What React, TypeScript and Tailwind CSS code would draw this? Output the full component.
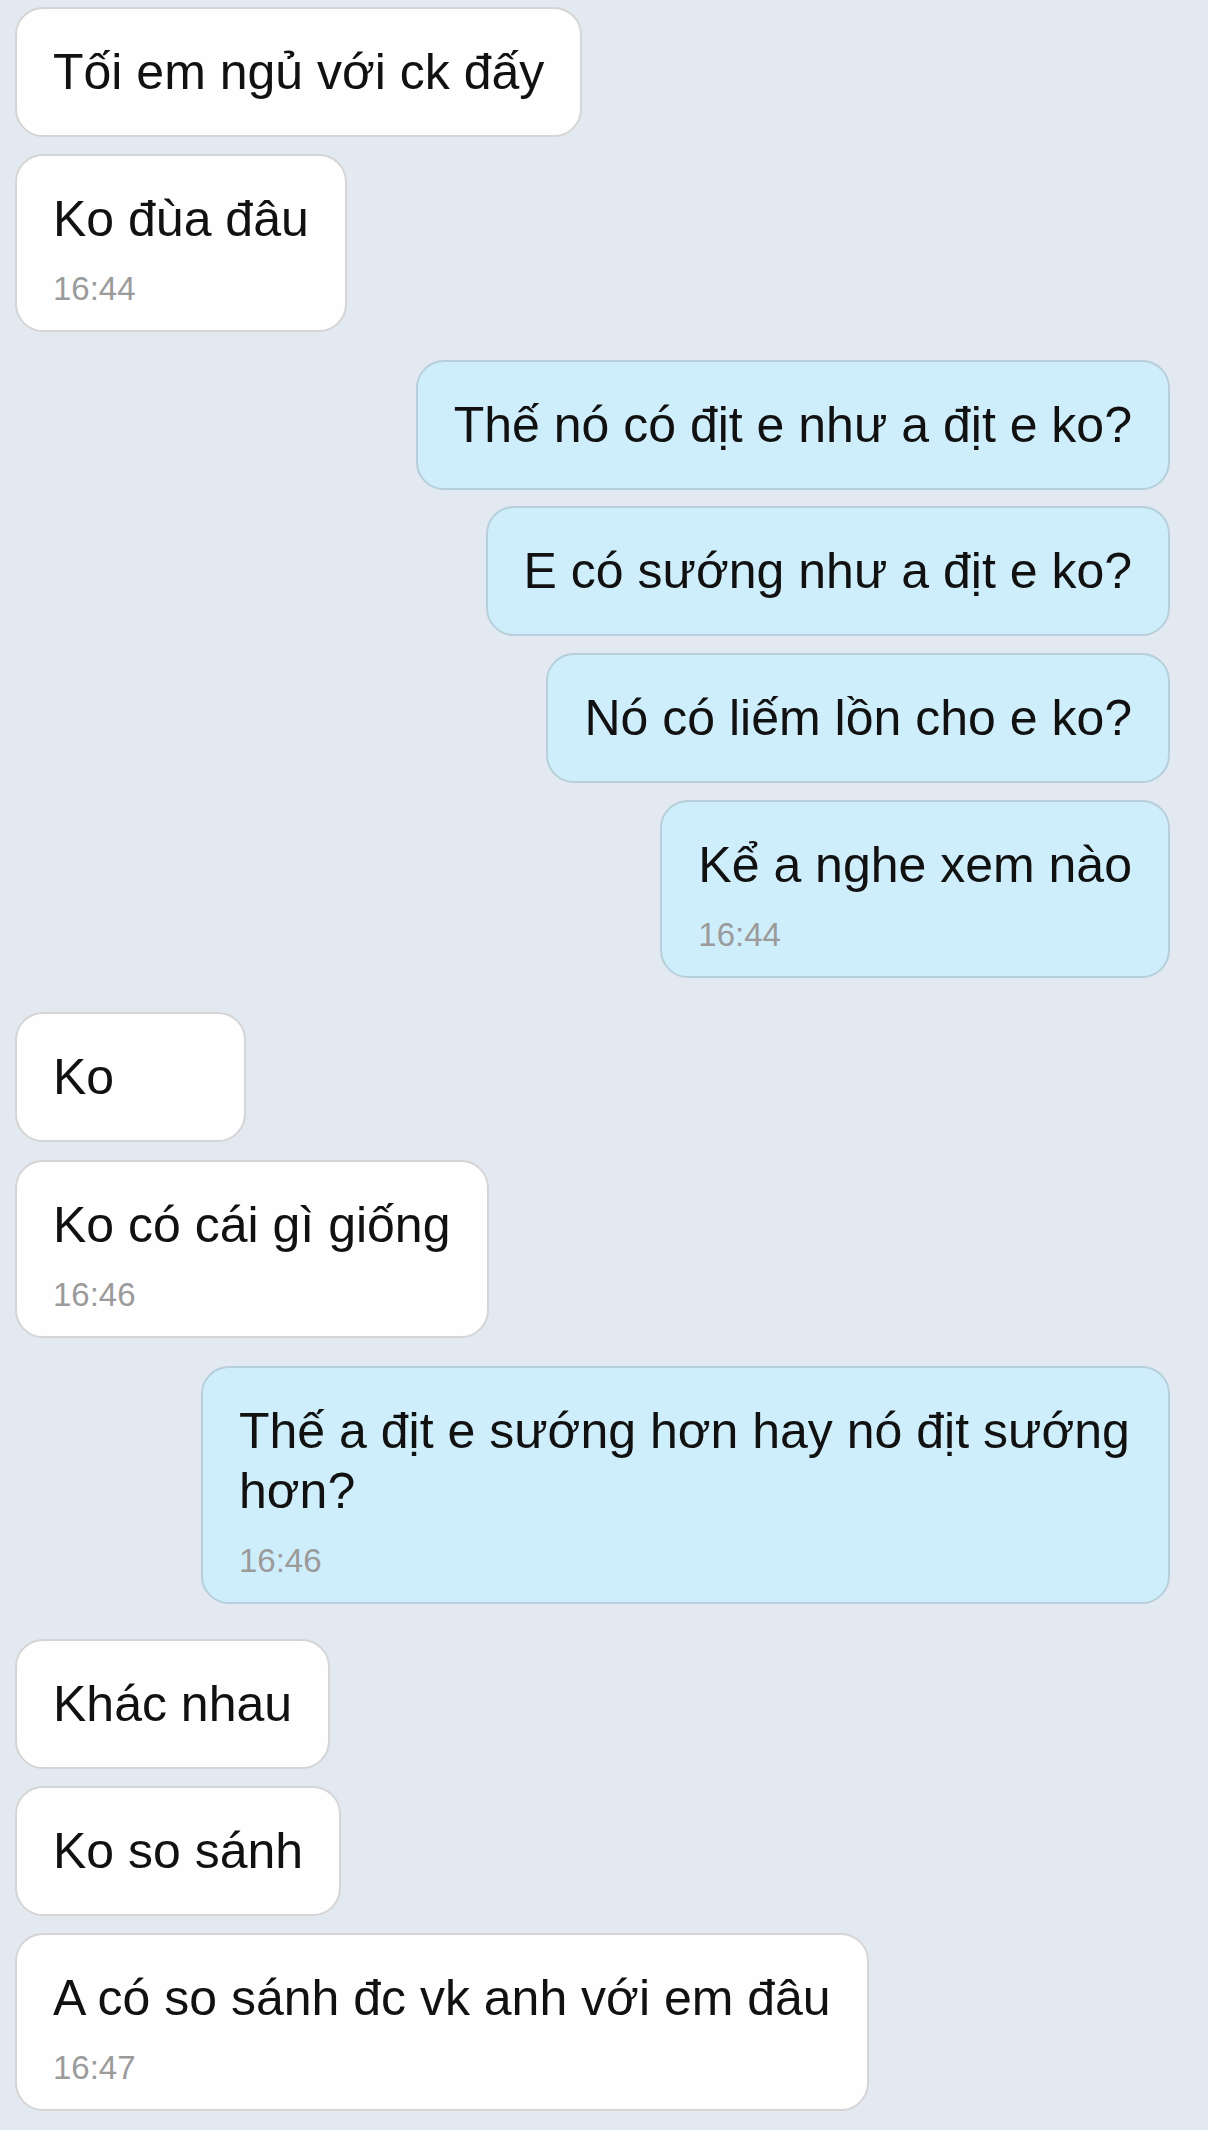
type Msg = {
  text: string;
  mine?: boolean;
  time?: string;
  mt: string;
};

const messages: Msg[] = [
  { text: "Tối em ngủ với ck đấy", mt: "mt-[7px]" },
  { text: "Ko đùa đâu", time: "16:44", mt: "mt-[17px]" },
  { text: "Thế nó có địt e như a địt e ko?", mine: true, mt: "mt-[28px]" },
  { text: "E có sướng như a địt e ko?", mine: true, mt: "mt-[16px]" },
  { text: "Nó có liếm lồn cho e ko?", mine: true, mt: "mt-[17px]" },
  { text: "Kể a nghe xem nào", mine: true, time: "16:44", mt: "mt-[17px]" },
  { text: "Ko", mt: "mt-[34px]" },
  { text: "Ko có cái gì giống", time: "16:46", mt: "mt-[18px]" },
  {
    text: "Thế a địt e sướng hơn hay nó địt sướng hơn?",
    mine: true,
    time: "16:46",
    mt: "mt-[28px]",
  },
  { text: "Khác nhau", mt: "mt-[35px]" },
  { text: "Ko so sánh", mt: "mt-[17px]" },
  { text: "A có so sánh đc vk anh với em đâu", time: "16:47", mt: "mt-[17px]" },
];

function Bubble({ msg }: { msg: Msg }) {
  return (
    <div
      className={`${msg.mt} min-w-[231px] max-w-[969px] rounded-[28px] border-2 pl-[36px] pr-[36px] pt-[33px] ${
        msg.time ? "pb-[21px]" : "pb-[33px]"
      } ${
        msg.mine
          ? "self-end border-[#b7cfdb] bg-[#cfeefc]"
          : "self-start border-[#d5d5d5] bg-[#fefefe]"
      }`}
    >
      <div className="text-[50px] leading-[60px] text-[#111111]">{msg.text}</div>
      {msg.time && (
        <div className="mt-[20px] text-[33px] leading-[40px] text-[#9b9b9b]">{msg.time}</div>
      )}
    </div>
  );
}

export default function App() {
  return (
    <div
      className="min-h-[2130px] w-[1208px] bg-[#e2e9f1] pl-[15px] pr-[38px]"
      style={{ fontFamily: '"Liberation Sans", Arial, sans-serif' }}
    >
      <div className="flex flex-col">
        {messages.map((m, i) => (
          <Bubble key={i} msg={m} />
        ))}
      </div>
    </div>
  );
}
